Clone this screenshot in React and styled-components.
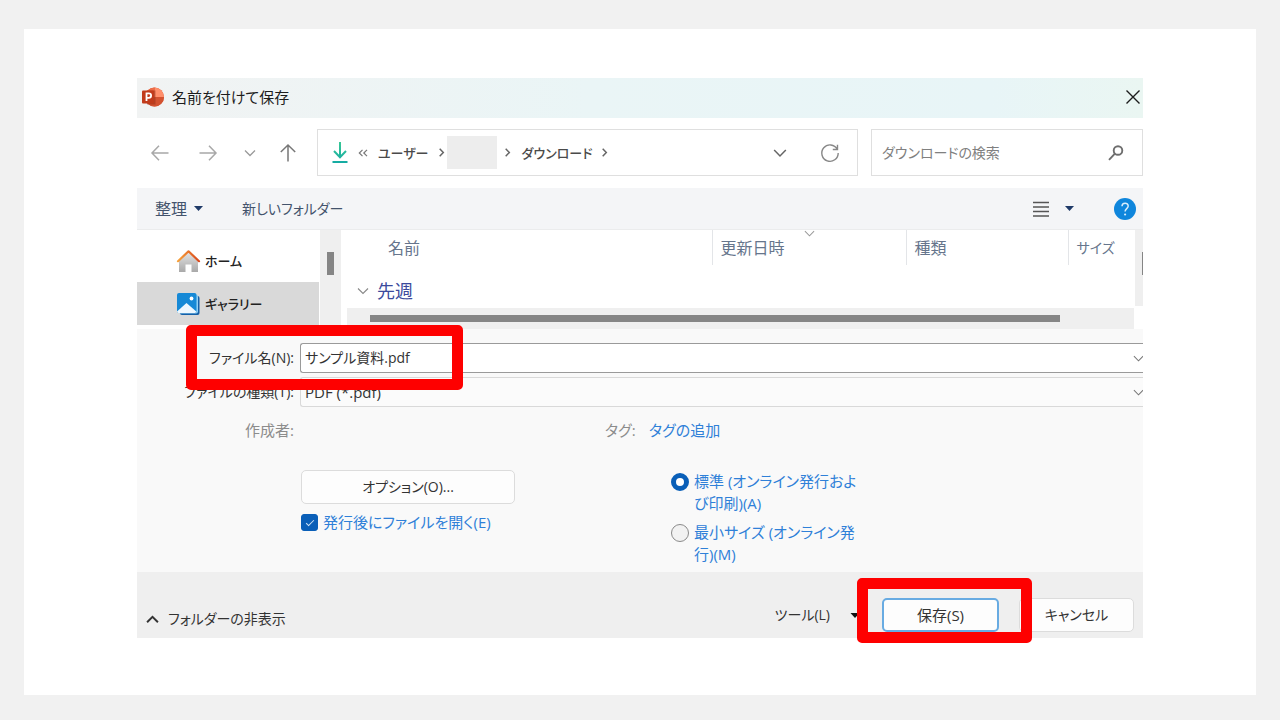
import React from "react";
import styled, { createGlobalStyle } from "styled-components";

const GlobalStyle = createGlobalStyle`
  *, *::before, *::after { box-sizing: border-box; }
  body {
    margin: 0;
    background: #f1f1f1;
    color: #333;
    font-family: "Open Sans", "Noto Sans CJK JP", sans-serif;
    font-size: 15px;
    line-height: 22px;
    font-feature-settings: "palt";
  }
  button, input, select {
    font: inherit;
    font-feature-settings: inherit;
    color: inherit;
    margin: 0;
    padding: 0;
  }
  button { border: 0; background: none; white-space: nowrap; }
  svg { display: block; flex: none; overflow: visible; }
`;

const Page = styled.div`
  min-height: 100vh;
  padding: 29px 24px 25px;
  display: flex;
`;

const Slide = styled.main`
  flex: 1;
  min-width: 0;
  background: #fff;
  padding: 49px 113px;
`;

const Dialog = styled.section`
  display: flex;
  flex-direction: column;
`;

const TitleBar = styled.header`
  height: 40px;
  display: flex;
  align-items: center;
  gap: 8px;
  padding: 0 0 2px 5px;
  background: linear-gradient(90deg, #f1f3f3 0%, #eaf5f6 45%, #e8f5f7 85%, #eaf6f2 100%);
`;

const Title = styled.h1`
  margin: 0;
  flex: 1;
  font-size: 15px;
  font-weight: 400;
  color: #1c1c1c;
`;

const IconButton = styled.button`
  flex: none;
  width: ${(p) => p.$w}px;
  height: 32px;
  display: flex;
  align-items: center;
  justify-content: center;
`;

const NavBar = styled.nav`
  height: 70px;
  display: flex;
  align-items: center;
  padding-bottom: 1px;
`;

const AddressBar = styled.div`
  flex: 1;
  min-width: 0;
  height: 47px;
  margin: 0 13px 0 8px;
  padding: 0 2px 0 14px;
  border: 1px solid #dfdfdf;
  display: flex;
  align-items: center;
  color: #4a4a4a;
`;

const Crumb = styled.button`
  height: 30px;
  padding: 0 10px 0 ${(p) => (p.$first ? 0 : 12)}px;
  font-size: 13px;
  font-weight: 500;
`;

const HiddenName = styled.div`
  width: 50px;
  height: 33px;
  margin: 0 8px 0 3px;
  background: #ededed;
`;

const Push = styled.div`
  flex: 1;
`;

const SearchBox = styled.label`
  width: 272px;
  height: 47px;
  border: 1px solid #dfdfdf;
  padding: 0 18px 0 10px;
  display: flex;
  align-items: center;
`;

const SearchInput = styled.input.attrs({ type: "search" })`
  flex: 1;
  min-width: 0;
  border: 0;
  outline: 0;
  background: transparent;
  appearance: none;
  font-size: 14px;
  &::placeholder { color: #808080; opacity: 1; }
`;

const Toolbar = styled.div`
  height: 42px;
  padding: 0 7px 0 18px;
  display: flex;
  align-items: center;
  background: #f4f5f7;
  border-bottom: 1px solid #ebeced;
  color: #43536c;
`;

const ToolButton = styled.button`
  display: flex;
  align-items: center;
  gap: 7px;
  margin-right: ${(p) => p.$after || 0}px;
  font-size: ${(p) => p.$size || 15}px;
`;

const Browser = styled.div`
  height: 99px;
  display: flex;
  overflow: hidden;
`;

const Sidebar = styled.ul`
  list-style: none;
  margin: 0;
  padding: 9px 0 0;
  width: 182px;
`;

const SideItem = styled.li`
  height: 43px;
  padding-left: 40px;
  display: flex;
  align-items: center;
  gap: 5px;
  font-size: 13px;
  font-weight: 500;
  color: #222;
  background: ${(p) => (p.$active ? "#d9d9d9" : "transparent")};
`;

const VScroll = styled.div`
  width: ${(p) => p.$w}px;
  height: ${(p) => p.$h}px;
  margin-left: ${(p) => p.$gap}px;
  padding: 22px 0 0 7px;
  background: #efefef;
  overflow: hidden;
  flex: none;
`;

const VThumb = styled.div`
  width: 7px;
  height: 23px;
  background: #858585;
`;

const Files = styled.div`
  flex: 1;
  min-width: 0;
  margin-left: 6px;
  display: flex;
  flex-direction: column;
`;

const FileTable = styled.table`
  width: 100%;
  table-layout: fixed;
  border-collapse: collapse;
  color: #66758c;
`;

const HeadCell = styled.th`
  position: relative;
  width: ${(p) => (p.$w ? p.$w + "px" : "auto")};
  height: 35px;
  padding: 0 0 0 ${(p) => p.$pad || 8}px;
  text-align: left;
  font-weight: 400;
  font-size: ${(p) => p.$size || 16}px;
  white-space: nowrap;
  border-left: ${(p) => (p.$first ? "0" : "1px solid #e3e5e8")};
`;

const SortMark = styled.span`
  position: absolute;
  top: -2px;
  left: calc(50% - 5px);
`;

const GroupCell = styled.td`
  height: 43px;
  padding: 0 0 0 10px;
  font-size: 18px;
  line-height: 24px;
  color: #3b4a9c;
`;

const GroupName = styled.span`
  display: flex;
  align-items: center;
  gap: 8px;
  padding-top: 8px;
`;

const HScroll = styled.div`
  height: 21px;
  padding: 7px 74px 7px 23px;
  background: #efefef;
`;

const HThumb = styled.div`
  height: 7px;
  background: #858585;
`;

const Form = styled.form`
  background: #f9f9f9;
`;

const Fields = styled.div`
  padding: 14px 0 0;
  height: 243px;
`;

const FieldRow = styled.div`
  position: relative;
  display: grid;
  grid-template-columns: 163px minmax(0, 1fr);
  align-items: center;
  margin-bottom: 4px;
`;

const FieldLabel = styled.label`
  padding-right: 6px;
  text-align: right;
  white-space: nowrap;
  font-size: ${(p) => (p.$muted ? 15 : 14)}px;
  color: ${(p) => (p.$muted ? "#8c8c8c" : "#333")};
`;

const Field = styled.span`
  position: relative;
  display: flex;
  height: 30px;
  overflow: hidden;
  background: ${(p) => (p.$strong ? "#fff" : "#fbfbfb")};
  border: 1px solid ${(p) => (p.$strong ? "#9a9a9a" : "#d9d9d9")};
  border-right: 0;
  border-radius: 3px 0 0 3px;
`;

const TextInput = styled.input`
  flex: 1;
  min-width: 0;
  padding: 0 20px 0 4px;
  border: 0;
  outline: 0;
  background: transparent;
  font-size: 14px;
`;

const Select = styled.select`
  flex: 1;
  min-width: 0;
  padding: 0 20px 0 4px;
  border: 0;
  outline: 0;
  appearance: none;
  background: transparent;
`;

const FieldArrow = styled.span`
  position: absolute;
  right: -1px;
  top: 9px;
  pointer-events: none;
`;

const Highlight = styled.span`
  position: absolute;
  z-index: 2;
  border: 11px solid #fe0000;
  border-radius: 5px;
  pointer-events: none;
`;

const NameHighlight = styled(Highlight)`
  left: 49px;
  top: -18px;
  width: 277px;
  height: 65px;
`;

const SaveHighlight = styled(Highlight)`
  inset: -20px -33px -11px -25px;
`;

const MetaRow = styled.div`
  display: grid;
  grid-template-columns: 163px 305px 44px auto;
  justify-content: start;
  align-items: center;
  margin-top: 12px;
`;

const Tag = styled.span`
  color: #8c8c8c;
`;

const TagLink = styled.a`
  color: #2f80d8;
  text-decoration: none;
`;

const OptionsRow = styled.div`
  display: flex;
  align-items: flex-start;
  margin-top: 29px;
  padding-left: 164px;
`;

const OptionColumn = styled.div`
  width: 370px;
  display: flex;
  flex-direction: column;
  align-items: flex-start;
  gap: 7px;
`;

const PushButton = styled.button`
  width: ${(p) => p.$w}px;
  height: 34px;
  background: #fdfdfd;
  font-size: ${(p) => (p.$primary ? 15 : 14)}px;
  border: ${(p) => (p.$primary ? "2px solid #68abe2" : "1px solid #dcdcdc")};
  border-radius: 5px;
`;

const Choice = styled.label`
  display: flex;
  align-items: flex-start;
  gap: 5px;
  color: #2f80d8;
`;

const CheckBox = styled.input.attrs({ type: "checkbox" })`
  appearance: none;
  flex: none;
  width: 17px;
  height: 17px;
  margin-top: 3px;
  border-radius: 3px;
  border: 1px solid #0a5fb8;
  background: #0a5fb8;
  display: grid;
  place-items: center;
  &:checked::after {
    content: "";
    width: 8px;
    height: 4px;
    margin-bottom: 2px;
    border: solid #cfe2f5;
    border-width: 0 0 1px 1px;
    transform: rotate(-45deg);
  }
`;

const Radio = styled.input.attrs({ type: "radio" })`
  appearance: none;
  flex: none;
  width: 18px;
  height: 18px;
  margin-top: 3px;
  border-radius: 50%;
  border: 1px solid #8a8a8a;
  background: #f2f2f2;
  &:checked {
    border: 5px solid #0a5fb8;
    background: #fff;
  }
`;

const RadioGroup = styled.div`
  width: 190px;
  display: flex;
  flex-direction: column;
  gap: 7px;
`;

const Footer = styled.footer`
  height: 66px;
  padding: 0 9px 6px 9px;
  display: flex;
  align-items: flex-end;
  background: #efefef;
`;

const FolderToggle = styled.button`
  height: 26px;
  display: flex;
  align-items: center;
  gap: 9px;
  font-size: 14px;
`;

const ToolsButton = styled.button`
  height: 34px;
  display: flex;
  align-items: center;
  gap: 20px;
  margin-right: 22px;
  font-size: 14px;
`;

const SaveWrap = styled.span`
  position: relative;
  display: flex;
  margin-right: 20px;
`;

const Chevron = ({ w = 12, dir = "down", color = "#777", sw = 1.3 }) => {
  const turn = { down: 0, up: 180, right: -90 }[dir];
  return (
    <svg width={w} height={w} viewBox="0 0 12 12" fill="none" stroke={color} strokeWidth={sw}>
      <path d="M1 3.5 6 8.5 11 3.5" transform={`rotate(${turn} 6 6)`} />
    </svg>
  );
};

const Caret = ({ color = "#1f3a68", w = 9 }) => (
  <svg width={w} height="5" viewBox="0 0 9 5">
    <path d="M0 0h9L4.500 5z" fill={color} />
  </svg>
);

const Arrow = ({ turn = 0, color = "#a8a8a8" }) => (
  <svg width="18" height="18" viewBox="0 0 18 18" fill="none" stroke={color} strokeWidth="1.5">
    <path d="M17.500 9H1.500M8 1.800 1 9l7 7.200" transform={`rotate(${turn} 9 9)`} />
  </svg>
);

const PowerPointIcon = () => (
  <svg width="22" height="20" viewBox="0 0 22 20">
    <circle cx="12.500" cy="10" r="9.500" fill="#d35230" />
    <path d="M12.500.5A9.500 9.500 0 0 1 22 10h-9.500z" fill="#ff8f6b" />
    <path d="M12.500.5A9.500 9.500 0 0 0 3 10h9.500z" fill="#ed6c47" />
    <path d="M3 10h19a9.500 9.500 0 0 1-19 0z" fill="#d35230" />
    <path d="M6 3.500h7.500v14H5z" fill="#8c2a14" opacity=".45" />
    <rect x="0" y="3.500" width="12" height="13" rx="1" fill="#c13b1b" />
    <path d="M4.500 14V6.300h2.300a2.300 2.300 0 0 1 0 4.600H4.500" fill="none" stroke="#fff" strokeWidth="1.800" />
  </svg>
);

const DownloadIcon = () => (
  <svg width="16" height="22" viewBox="0 0 16 22" fill="none">
    <defs>
      <linearGradient id="dl" x1="0" y1="0" x2="0" y2="22" gradientUnits="userSpaceOnUse">
        <stop offset="0" stopColor="#38c795" />
        <stop offset="1" stopColor="#12a9a4" />
      </linearGradient>
    </defs>
    <path d="M8 0v15.500M2 9l6 6.200L14 9M.5 20h15" stroke="url(#dl)" strokeWidth="2" />
  </svg>
);

const GuillemetIcon = () => (
  <svg width="10" height="8" viewBox="0 0 10 8" fill="none" stroke="#777" strokeWidth="1.200">
    <path d="M4.500.8 1.300 4l3.200 3.200M9 .8 5.800 4 9 7.200" />
  </svg>
);

const CrumbArrow = () => (
  <svg width="5" height="9" viewBox="0 0 5 9" fill="none" stroke="#666" strokeWidth="1.500">
    <path d="M.7.8 4.300 4.500.7 8.200" />
  </svg>
);

const RefreshIcon = () => (
  <svg width="18" height="18" viewBox="0 0 18 18" fill="none" stroke="#888" strokeWidth="1.400">
    <path d="M16.200 5.200A8.200 8.200 0 1 0 17.200 9M16.500.8v4.700h-4.700" />
  </svg>
);

const SearchIcon = () => (
  <svg width="16" height="16" viewBox="0 0 16 16" fill="none" stroke="#6e6e6e" strokeWidth="1.900">
    <circle cx="10" cy="5.500" r="4.300" />
    <path d="M6.900 8.600 1 14.800" />
  </svg>
);

const ListIcon = () => (
  <svg width="16" height="16" viewBox="0 0 16 16" stroke="#555" strokeWidth="1.300">
    <path d="M0 1.500h16M0 6h16M0 10.500h16M0 15h16" />
  </svg>
);

const HelpIcon = () => (
  <svg width="22" height="22" viewBox="0 0 22 22" fill="none">
    <circle cx="11" cy="11" r="11" fill="#0f86dc" />
    <path d="M8 8.300c0-4 6.200-4 6.200-.3 0 2.600-3.100 2.700-3.100 5.400" stroke="#d9edfb" strokeWidth="1.500" />
    <circle cx="11.100" cy="16.500" r="1.100" fill="#d9edfb" />
  </svg>
);

const CloseIcon = () => (
  <svg width="14" height="14" viewBox="0 0 14 14" stroke="#1c1c1c" strokeWidth="1.400">
    <path d="M.5.5l13 13M13.500.5l-13 13" />
  </svg>
);

const HomeIcon = () => (
  <svg width="23" height="22" viewBox="0 0 23 22" fill="none">
    <defs>
      <linearGradient id="wall" x1="0" y1="0" x2="0" y2="1">
        <stop offset="0" stopColor="#e4e4e4" />
        <stop offset="1" stopColor="#a9a9a9" />
      </linearGradient>
      <linearGradient id="roof" x1="0" y1="0" x2="1" y2="0">
        <stop offset="0" stopColor="#f7a23b" />
        <stop offset="1" stopColor="#d9481c" />
      </linearGradient>
    </defs>
    <path d="M2 10.500 11.500 2l9.500 8.500V22h-6.500v-7.500h-6V22H2z" fill="url(#wall)" />
    <path d="M1 11.200 11.500 1.300 22 11.200" stroke="url(#roof)" strokeWidth="2.200" strokeLinecap="round" strokeLinejoin="round" />
  </svg>
);

const GalleryIcon = () => (
  <svg width="23" height="22" viewBox="0 0 23 22">
    <rect x="3" y="3" width="19.500" height="19" rx="2" fill="#1560a8" />
    <rect x="1.500" y="1.500" width="19.500" height="19" rx="2" fill="#8fd0f5" />
    <rect x="0" y="0" width="19.500" height="20" rx="2" fill="#1689d6" />
    <path d="M0 18.500 9.500 10l9.800 8.500c-.2.900-.9 1.500-1.800 1.500H2c-1 0-1.800-.6-2-1.500z" fill="#eef8ff" />
    <circle cx="14.500" cy="5.500" r="1.900" fill="#fff" />
  </svg>
);

export default function App() {
  return (
    <Page>
      <GlobalStyle />
      <Slide>
        <Dialog>
          <TitleBar>
            <PowerPointIcon />
            <Title>名前を付けて保存</Title>
            <IconButton $w={20} aria-label="閉じる"><CloseIcon /></IconButton>
          </TitleBar>

          <NavBar>
            <IconButton $w={46} aria-label="戻る"><Arrow /></IconButton>
            <IconButton $w={50} aria-label="進む"><Arrow turn={180} /></IconButton>
            <IconButton $w={34} aria-label="履歴"><Chevron color="#9a9a9a" /></IconButton>
            <IconButton $w={42} aria-label="上へ"><Arrow turn={90} color="#777" /></IconButton>
            <AddressBar>
              <DownloadIcon />
              <IconButton $w={30} aria-label="上位のフォルダー"><GuillemetIcon /></IconButton>
              <Crumb $first>ユーザー</Crumb>
              <CrumbArrow />
              <HiddenName />
              <CrumbArrow />
              <Crumb>ダウンロード</Crumb>
              <CrumbArrow />
              <Push />
              <IconButton $w={50} aria-label="場所の一覧"><Chevron w={14} color="#666" /></IconButton>
              <IconButton $w={50} aria-label="更新"><RefreshIcon /></IconButton>
            </AddressBar>
            <SearchBox>
              <SearchInput placeholder="ダウンロードの検索" />
              <SearchIcon />
            </SearchBox>
          </NavBar>

          <Toolbar>
            <ToolButton $after={39} $size={16}>整理 <Caret /></ToolButton>
            <ToolButton $size={14}>新しいフォルダー</ToolButton>
            <Push />
            <ToolButton $after={16} aria-label="表示"><ListIcon /></ToolButton>
            <ToolButton $after={40} aria-label="表示方法"><Caret /></ToolButton>
            <ToolButton aria-label="ヘルプ"><HelpIcon /></ToolButton>
          </Toolbar>

          <Browser>
            <Sidebar>
              <SideItem><HomeIcon />ホーム</SideItem>
              <SideItem $active><GalleryIcon />ギャラリー</SideItem>
            </Sidebar>
            <VScroll $w={21} $h={99} $gap={1}><VThumb /></VScroll>
            <Files>
              <FileTable>
                <thead>
                  <tr>
                    <HeadCell $first $pad={41}>名前</HeadCell>
                    <HeadCell $w={194}>更新日時<SortMark><Chevron color="#999" sw={1.1} w={11} /></SortMark></HeadCell>
                    <HeadCell $w={162}>種類</HeadCell>
                    <HeadCell $w={66} $size={14}>サイズ</HeadCell>
                  </tr>
                </thead>
                <tbody>
                  <tr>
                    <GroupCell colSpan={4}>
                      <GroupName><Chevron color="#888" sw={1.1} />先週</GroupName>
                    </GroupCell>
                  </tr>
                </tbody>
              </FileTable>
              <HScroll><HThumb /></HScroll>
            </Files>
            <VScroll $w={8} $h={76} $gap={1}><VThumb /></VScroll>
          </Browser>

          <Form onSubmit={(e) => e.preventDefault()}>
            <Fields>
              <FieldRow>
                <FieldLabel htmlFor="file-name">ファイル名(N):</FieldLabel>
                <Field $strong>
                  <TextInput id="file-name" defaultValue="サンプル資料.pdf" />
                  <FieldArrow><Chevron sw={1.1} w={11} /></FieldArrow>
                </Field>
                <NameHighlight />
              </FieldRow>
              <FieldRow>
                <FieldLabel htmlFor="file-type">ファイルの種類(T):</FieldLabel>
                <Field>
                  <Select id="file-type"><option>PDF (*.pdf)</option></Select>
                  <FieldArrow><Chevron sw={1.1} w={11} /></FieldArrow>
                </Field>
              </FieldRow>
              <MetaRow>
                <FieldLabel as="span" $muted>作成者:</FieldLabel>
                <span />
                <Tag>タグ:</Tag>
                <TagLink href="#tag">タグの追加</TagLink>
              </MetaRow>
              <OptionsRow>
                <OptionColumn>
                  <PushButton type="button" $w={214}>オプション(O)...</PushButton>
                  <Choice><CheckBox defaultChecked />発行後にファイルを開く(E)</Choice>
                </OptionColumn>
                <RadioGroup>
                  <Choice><Radio name="size" defaultChecked /><span>標準 (オンライン発行および印刷)(A)</span></Choice>
                  <Choice><Radio name="size" /><span>最小サイズ (オンライン発行)(M)</span></Choice>
                </RadioGroup>
              </OptionsRow>
            </Fields>
            <Footer>
              <FolderToggle type="button"><Chevron dir="up" color="#333" sw={1.8} w={13} />フォルダーの非表示</FolderToggle>
              <Push />
              <ToolsButton type="button">ツール(L) <Caret color="#111" w={10} /></ToolsButton>
              <SaveWrap>
                <PushButton $w={117} $primary>保存(S)</PushButton>
                <SaveHighlight />
              </SaveWrap>
              <PushButton type="button" $w={115}>キャンセル</PushButton>
            </Footer>
          </Form>
        </Dialog>
      </Slide>
    </Page>
  );
}
